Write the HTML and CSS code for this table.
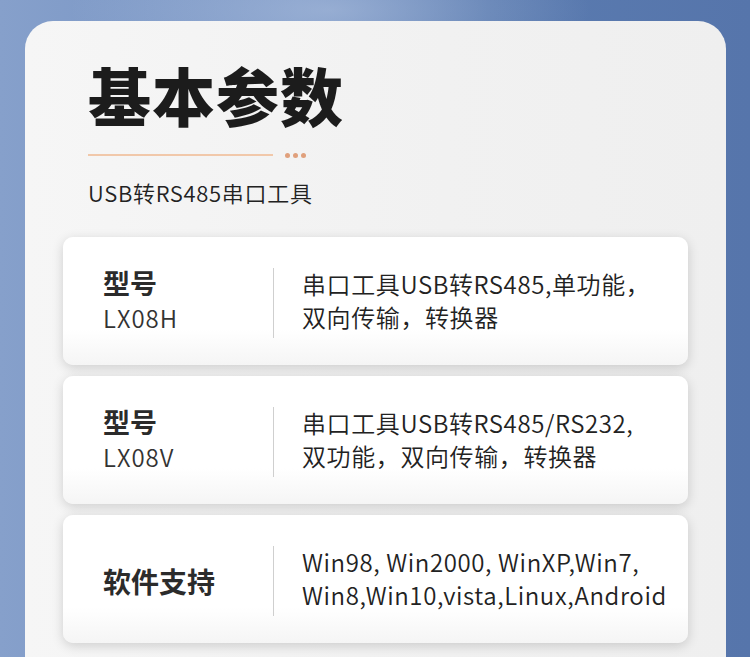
FILE: index.html
```html
<!DOCTYPE html>
<html lang="zh-CN">
<head>
  <meta charset="UTF-8" />
  <meta name="viewport" content="width=device-width, initial-scale=1.0"/>
  <title>基本参数</title>
  <link rel="stylesheet" href="styles.css">
</head>
<body>

  <div class="panel">
    <div class="header">
      <h1>基本参数</h1>
      <div class="rule">
        <span class="rule-line"></span>
        <span class="dot"></span>
        <span class="dot"></span>
        <span class="dot"></span>
      </div>
      <p class="subtitle">USB转RS485串口工具</p>
    </div>

    <div class="cards">
      <div class="card">
        <div class="label">
          <strong>型号</strong>
          <span>LX08H</span>
        </div>
        <div class="value">串口工具USB转RS485,单功能，<br>双向传输，转换器</div>
      </div>

      <div class="card">
        <div class="label">
          <strong>型号</strong>
          <span>LX08V</span>
        </div>
        <div class="value">串口工具USB转RS485/RS232,<br>双功能，双向传输，转换器</div>
      </div>

      <div class="card">
        <div class="label">
          <strong class="big">软件支持</strong>
        </div>
        <div class="value">Win98, Win2000, WinXP,Win7,<br>Win8,Win10,vista,Linux,Android</div>
      </div>
    </div>
  </div>

</body>
</html>
```

FILE: styles.css
```css
body {
  margin: 0;
  padding: 21px 24px 0 25px;
  height: 657px;
  box-sizing: border-box;
  overflow: hidden;
  font-family: "Noto Sans CJK SC", "Noto Sans", sans-serif;
  color: #222;
  background:
    radial-gradient(ellipse 260px 80px at 330px 10px, rgba(190, 205, 230, 0.5), rgba(190, 205, 230, 0)),
    linear-gradient(90deg, #86a0cb 0%, #7391c2 40%, #5a7bb0 65%, #5675ab 100%);
}

.panel {
  background: linear-gradient(90deg, #f6f6f6 0%, #f1f1f1 60%, #efefef 100%);
  border-radius: 28px 28px 0 0;
  padding: 0 38px 40px;
  min-height: 700px;
}

.header {
  padding: 40px 0 0 25px;
}

h1 {
  margin: 0;
  font-size: 63px;
  font-weight: 900;
  line-height: 1.05;
  letter-spacing: 1px;
  color: #1c1c1c;
}

.rule {
  display: flex;
  align-items: center;
  gap: 3px;
  margin-top: 25px;
  height: 6px;
}

.rule-line {
  width: 185px;
  height: 2px;
  background-color: #f1c8aa;
  margin-right: 9px;
}

.dot {
  width: 5px;
  height: 5px;
  border-radius: 50%;
  background-color: #e0a07c;
}

.subtitle {
  margin: 19px 0 0;
  font-size: 22px;
  line-height: 30px;
  font-weight: 350;
  letter-spacing: 0.7px;
  color: #222;
}

.cards {
  display: flex;
  flex-direction: column;
  gap: 11px;
  margin-top: 30px;
}

.card {
  display: flex;
  align-items: center;
  height: 128px;
  background: linear-gradient(180deg, #ffffff 0%, #ffffff 72%, #f5f5f5 100%);
  border-radius: 10px;
  box-shadow: 0 3px 12px rgba(0, 0, 0, 0.16);
}

.label {
  display: flex;
  flex-direction: column;
  justify-content: center;
  width: 170px;
  height: 70px;
  padding-left: 40px;
  border-right: 1px solid #cfcfcf;
  margin-top: 4px;
  box-sizing: content-box;
  color: #333;
}

.label strong {
  font-size: 27px;
  font-weight: 700;
  line-height: 34px;
  color: #2b2b2b;
  margin-top: -4px;
}

.label span {
  font-size: 24px;
  line-height: 36px;
  font-weight: 350;
  letter-spacing: 1px;
  color: #333;
}

.label .big {
  font-size: 28px;
  margin-top: 0;
}

.value {
  padding-left: 28px;
  font-size: 24px;
  line-height: 33px;
  font-weight: 350;
  letter-spacing: 0.6px;
  color: #222;
  margin-top: -2px;
}
```
